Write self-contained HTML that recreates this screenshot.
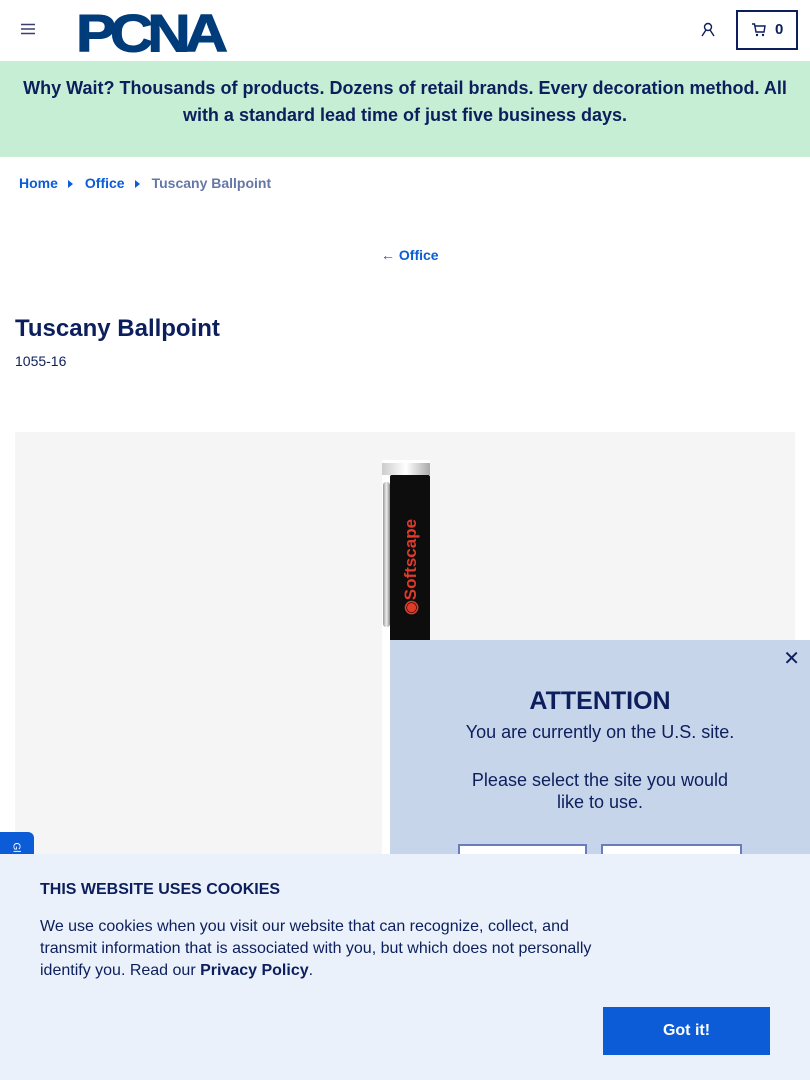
<!DOCTYPE html>
<html><head><meta charset="utf-8"><style>
*{margin:0;padding:0;box-sizing:border-box}
body{width:810px;height:1080px;overflow:hidden;position:relative;font-family:"Liberation Sans",Arial,sans-serif;background:#fff;color:#0c1f5c}
.hdr{height:61px;position:relative}
.logo{position:absolute;left:76px;top:3px;font-weight:900;font-size:50px;letter-spacing:-5px;color:#003b7a;transform:scale(1.2,1.05);transform-origin:left top;-webkit-text-stroke:1px #003b7a}
.tm{position:absolute;left:215px;top:44px;font-size:5px;color:#003b7a;font-weight:bold}
.banner{position:absolute;top:61px;left:0;width:810px;height:96px;background:#c5eed5;text-align:center;font-weight:bold;font-size:18px;line-height:27px;padding-top:14px;color:#0c1f5c}
.crumb{position:absolute;top:175px;left:19px;font-size:14px;font-weight:bold;color:#0b5cd6}
.crumb .tri{display:inline-block;width:0;height:0;border-left:5px solid #0b5cd6;border-top:4px solid transparent;border-bottom:4px solid transparent;margin:0 12px 0 10px}
.back{position:absolute;top:247px;left:381px;font-size:14px;font-weight:bold;color:#0b5cd6}
h1{position:absolute;top:315px;left:15px;font-size:24px;font-weight:bold;color:#0c1f5c}
.sku{position:absolute;top:353px;left:15px;font-size:14px;color:#0c1f5c}
.img{position:absolute;top:432px;left:15px;width:780px;height:430px;background:#f5f5f5}
.pop{position:absolute;left:390px;top:640px;width:420px;height:220px;background:#c7d5eb;text-align:center;color:#0c1f5c}
.cookie{position:absolute;left:0;top:854px;width:810px;height:226px;background:#eaf1fa}
</style></head><body>
<div class="hdr">
<svg style="position:absolute;left:21px;top:23px" width="14" height="12"><path d="M0 1.5H14M0 6H14M0 10.5H14" stroke="#3b3f6e" stroke-width="1.6"/></svg>
<div class="logo">PCNA</div><div class="tm">TM</div>
<svg style="position:absolute;left:701px;top:22px" width="14" height="15"><circle cx="7" cy="5" r="3.5" fill="none" stroke="#0c1f5c" stroke-width="1.4"/><path d="M5 8L1 14M9 8L13 14" stroke="#0c1f5c" stroke-width="1.4" fill="none"/></svg>
<div style="position:absolute;left:736px;top:10px;width:62px;height:40px;border:2px solid #0c1f5c"></div>
<svg style="position:absolute;left:752px;top:23px" width="14" height="14"><path d="M0 1H2.5L4 9H12L13 3H3" fill="none" stroke="#0c1f5c" stroke-width="1.4"/><circle cx="5" cy="12" r="1.2" fill="#0c1f5c"/><circle cx="11" cy="12" r="1.2" fill="#0c1f5c"/></svg>
<div style="position:absolute;left:775px;top:21px;font-weight:bold;font-size:15px">0</div>
</div>
<div class="banner">Why Wait? Thousands of products. Dozens of retail brands. Every decoration method. All<br>with a standard lead time of just five business days.</div>
<div class="crumb">Home<span class="tri"></span>Office<span class="tri"></span><span style="color:#6577a8">Tuscany Ballpoint</span></div>
<div class="back">← Office</div>
<h1>Tuscany Ballpoint</h1>
<div class="sku">1055-16</div>
<div class="img">
<div style="position:absolute;left:367px;top:28px;width:48px;height:400px;background:#fff"></div>
<div style="position:absolute;left:367px;top:31px;width:48px;height:12px;background:linear-gradient(90deg,#ccc,#fff,#aaa)"></div>
<div style="position:absolute;left:375px;top:43px;width:40px;height:400px;background:#0d0d0d;border-radius:2px"></div>
<div style="position:absolute;left:368px;top:50px;width:7px;height:145px;background:linear-gradient(90deg,#999,#eee,#888);border-radius:3px"></div>
<div style="position:absolute;left:396px;top:135px;transform:translate(-50%,-50%) rotate(-90deg);color:#e03a2b;font-weight:bold;font-size:17px;white-space:nowrap">◉Softscape</div>
</div>
<div class="pop">
<div style="position:absolute;right:10px;top:6px;font-size:20px">✕</div>
<div style="margin-top:47px;font-size:25px;font-weight:bold">ATTENTION</div>
<div style="margin-top:6px;font-size:18px">You are currently on the U.S. site.</div>
<div style="margin-top:26px;font-size:18px;line-height:22px">Please select the site you would<br>like to use.</div>
<div style="position:absolute;left:68px;top:204px;width:129px;height:30px;border:2px solid #6a7cc0;background:#fff"></div>
<div style="position:absolute;left:211px;top:204px;width:141px;height:30px;border:2px solid #6a7cc0;background:#fff"></div>
</div>
<div style="position:absolute;left:0;top:832px;width:34px;height:30px;background:#0b5cd6;border-radius:0 6px 0 0;overflow:hidden"><div style="position:absolute;left:11px;top:10px;color:#fff;font-size:10px;transform:rotate(90deg)">Gl</div></div>
<div class="cookie">
<div style="position:absolute;left:40px;top:27px;font-weight:bold;font-size:16px">THIS WEBSITE USES COOKIES</div>
<div style="position:absolute;left:40px;top:62px;width:570px;font-size:16px;line-height:22px">We use cookies when you visit our website that can recognize, collect, and transmit information that is associated with you, but which does not personally identify you. Read our <b>Privacy Policy</b>.</div>
<div style="position:absolute;left:603px;top:153px;width:167px;height:48px;background:#0b5cd6;color:#fff;font-weight:bold;font-size:16px;text-align:center;line-height:48px">Got it!</div>
</div>
</body></html>
